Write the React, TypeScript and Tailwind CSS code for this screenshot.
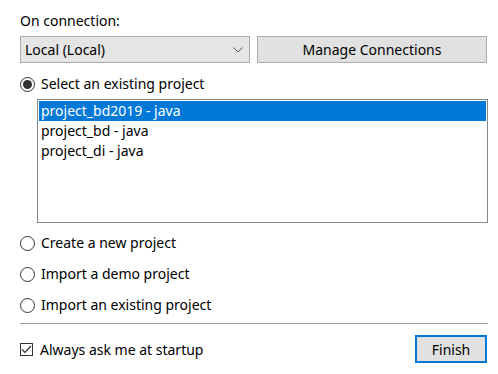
const font = { fontFamily: '"Segoe UI", "Noto Sans", "Open Sans", sans-serif' };

const Radio = ({ checked, label }: { checked?: boolean; label: string }) => (
  <label className="flex items-center h-[20px]">
    <span className="w-[15px] h-[15px] rounded-full border border-[#333333] bg-white flex items-center justify-center shrink-0">
      {checked && <span className="w-[9px] h-[9px] rounded-full bg-[#333333]" />}
    </span>
    <span className="ml-[6px] text-[14px] text-black leading-none">{label}</span>
  </label>
);

const projects = ["project_bd2019 - java", "project_bd - java", "project_di - java"];

export default function App() {
  return (
    <div className="w-[498px] h-[374px] bg-white pl-[20px] pr-[10px] pt-[11px] select-none" style={font}>
      <div className="text-[14px] text-black leading-[20px]">On connection:</div>
      <div className="flex gap-[7px] mt-[5px] w-[468px]">
        <div className="w-[230px] h-[27px] bg-[#e5e5e5] border border-[#adadad] flex items-center justify-between pl-[4px] pr-[6px]">
          <span className="text-[14px] text-black">Local (Local)</span>
          <svg width="10" height="6" viewBox="0 0 10 6" fill="none" stroke="#555" strokeWidth="1">
            <path d="M0.5 0.5 L5 5 L9.5 0.5" />
          </svg>
        </div>
        <button className="w-[230px] h-[27px] bg-[#e1e1e1] border border-[#adadad] text-[14px] text-black">
          Manage Connections
        </button>
      </div>
      <div className="mt-[11px]">
        <Radio checked label="Select an existing project" />
      </div>
      <div className="ml-[17px] mt-[5px] w-[451px] h-[124px] border border-[#828790] p-[1px]">
        {projects.map((p, i) => (
          <div
            key={p}
            className={`h-[20px] px-[2px] text-[14px] leading-[20px] ${i === 0 ? "bg-[#0078d7] text-white" : "text-black"}`}
          >
            {p}
          </div>
        ))}
      </div>
      <div className="flex flex-col gap-[11px] mt-[10px]">
        <Radio label="Create a new project" />
        <Radio label="Import a demo project" />
        <Radio label="Import an existing project" />
      </div>
      <div className="w-[468px] h-px bg-[#a0a0a0] mt-[8px]" />
      <div className="flex items-center justify-between w-[467px] mt-[11px]">
        <label className="flex items-center">
          <span className="w-[13px] h-[13px] border border-[#333333] bg-white flex items-center justify-center">
            <svg width="11" height="9" viewBox="0 0 11 9" fill="none" stroke="#333" strokeWidth="1.2">
              <path d="M1 4.5 L4 7.5 L10 1" />
            </svg>
          </span>
          <span className="ml-[7px] text-[14px] text-black">Always ask me at startup</span>
        </label>
        <button className="w-[72px] h-[28px] bg-[#e1e1e1] border-2 border-[#0078d7] text-[14px] text-black">
          Finish
        </button>
      </div>
    </div>
  );
}
